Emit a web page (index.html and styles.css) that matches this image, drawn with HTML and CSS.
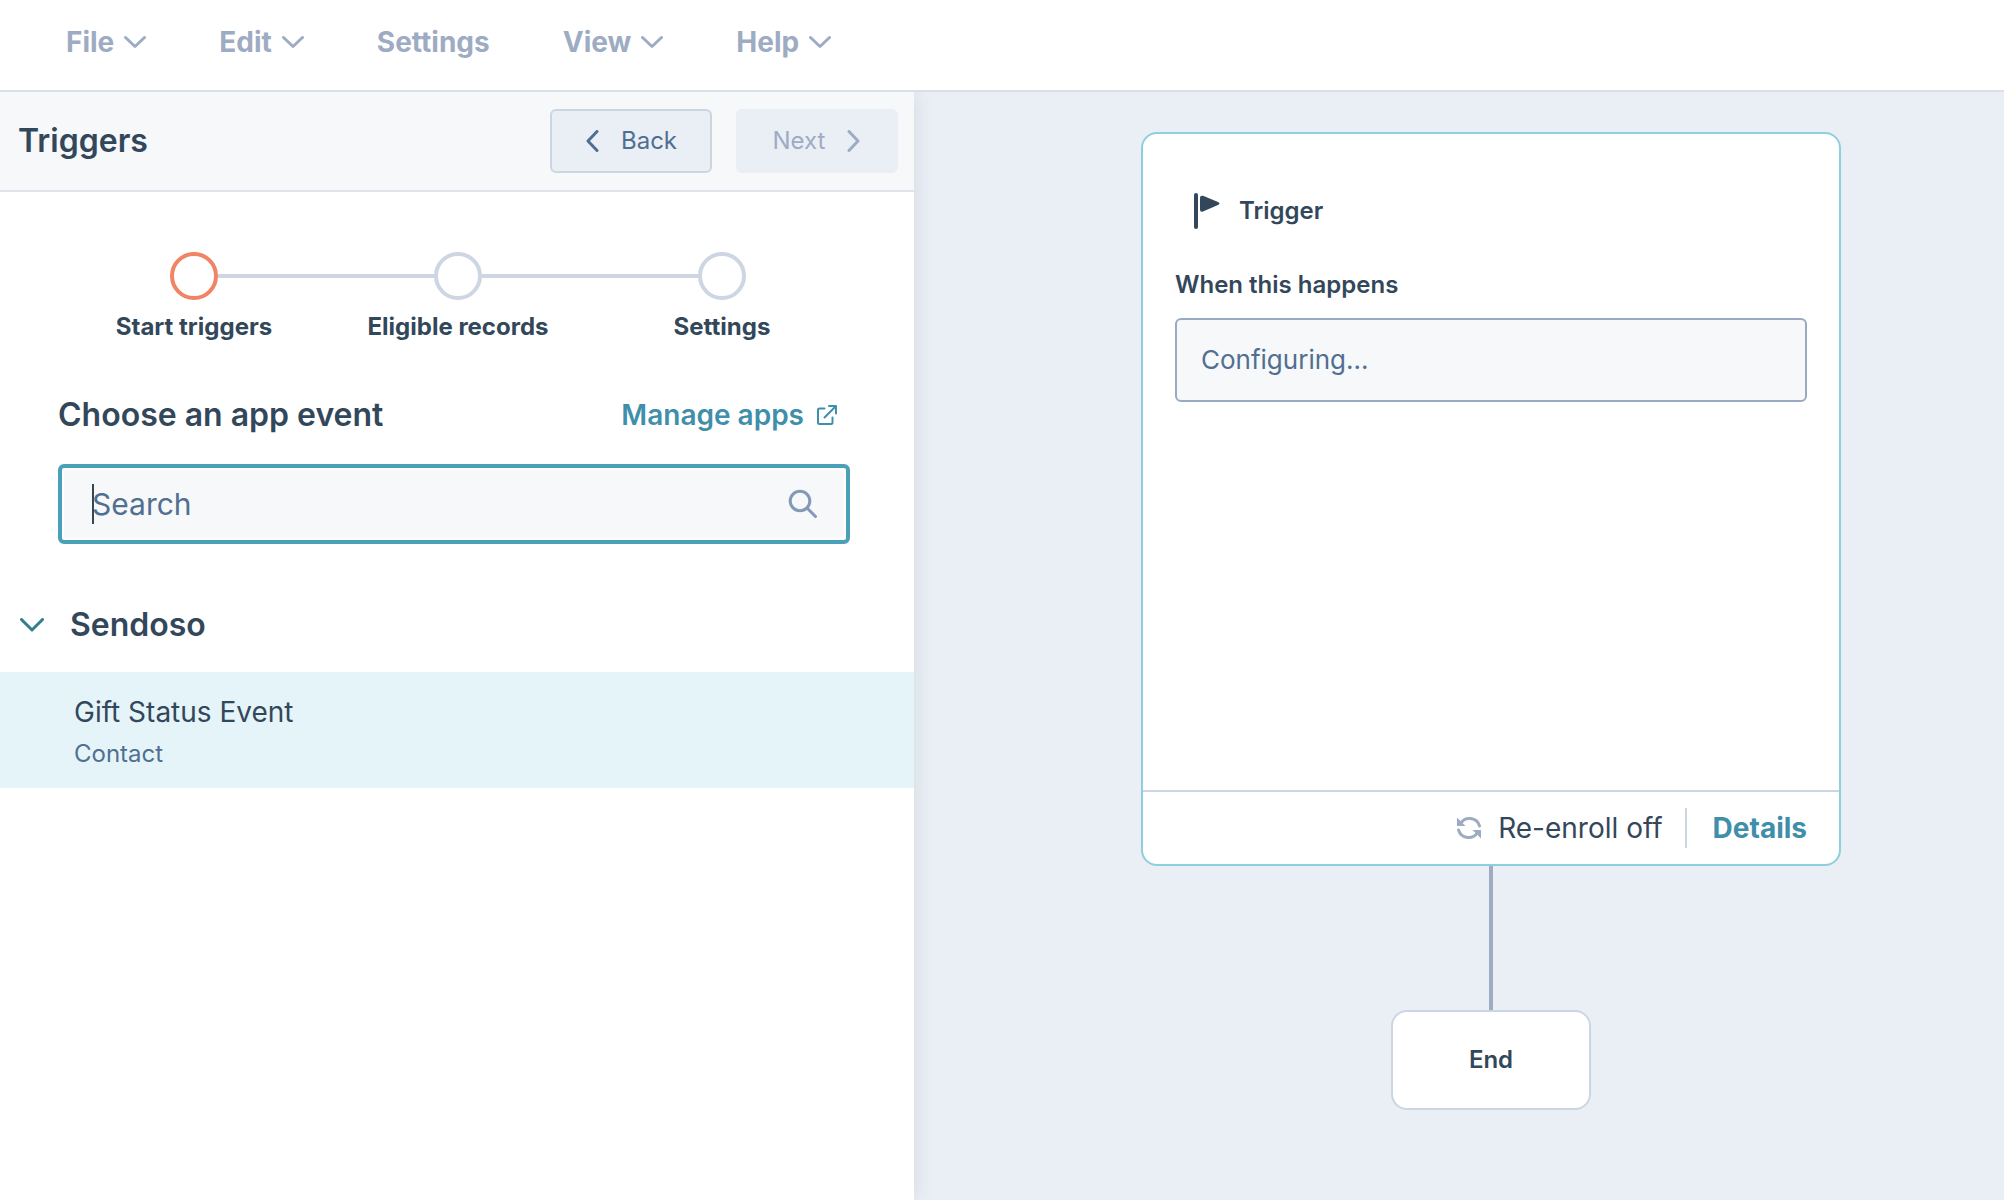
FILE: index.html
```html
<!DOCTYPE html>
<html lang="en">
<head>
<meta charset="utf-8">
<title>Triggers</title>
<link rel="stylesheet" href="styles.css">
</head>
<body>
<header class="topbar">
  <nav class="menu" aria-label="Main">
    <button class="menu-item" type="button">File
      <svg class="caret-down" viewBox="0 0 22 14" aria-hidden="true"><path d="M1.500 2.500L11 11.500l9.500-9"/></svg>
    </button>
    <button class="menu-item" type="button">Edit
      <svg class="caret-down" viewBox="0 0 22 14" aria-hidden="true"><path d="M1.500 2.500L11 11.500l9.500-9"/></svg>
    </button>
    <button class="menu-item" type="button">Settings</button>
    <button class="menu-item" type="button">View
      <svg class="caret-down" viewBox="0 0 22 14" aria-hidden="true"><path d="M1.500 2.500L11 11.500l9.500-9"/></svg>
    </button>
    <button class="menu-item" type="button">Help
      <svg class="caret-down" viewBox="0 0 22 14" aria-hidden="true"><path d="M1.500 2.500L11 11.500l9.500-9"/></svg>
    </button>
  </nav>
</header>
<div class="workspace">
  <aside class="panel">
    <div class="panel-head">
      <h1 class="title">Triggers</h1>
      <button class="btn btn-back" type="button">
        <svg class="arrow" viewBox="0 0 14 22" aria-hidden="true"><path d="M12 1.500L3 11l9 9.500"/></svg>
        Back
      </button>
      <button class="btn btn-next" type="button" disabled>
        Next
        <svg class="arrow" viewBox="0 0 14 22" aria-hidden="true"><path d="M2 1.500L11 11l-9 9.500"/></svg>
      </button>
    </div>
    <ol class="steps">
      <li class="step step-current"><span class="dot"></span><span class="step-label">Start triggers</span></li>
      <li class="step"><span class="dot"></span><span class="step-label">Eligible records</span></li>
      <li class="step"><span class="dot"></span><span class="step-label">Settings</span></li>
    </ol>
    <div class="chooser">
      <div class="chooser-head">
        <h2 class="title"><label for="search">Choose an app event</label></h2>
        <a class="link" href="#">Manage apps
          <svg class="external" viewBox="0 0 22 22" aria-hidden="true"><path d="M8.500 4.500H3.500a1.500 1.500 0 0 0-1.500 1.500V18.500a1.500 1.500 0 0 0 1.500 1.500H15a1.500 1.500 0 0 0 1.500-1.500V13.500M8.500 13.500L19.500 2.500M13 2H20v7.500"/></svg>
        </a>
      </div>
      <div class="search">
        <span class="text-cursor"></span>
        <input class="search-input" id="search" type="text" placeholder="Search">
        <svg class="magnifier" viewBox="0 0 30 30" aria-hidden="true"><circle cx="12" cy="12" r="9.800"/><path d="M19 19l8.500 8.500"/></svg>
      </div>
    </div>
    <section>
      <h2 class="group title">
        <svg class="group-caret" viewBox="0 0 24 14" aria-hidden="true"><path d="M1.500 1.500L12 12 22.500 1.500"/></svg>
        Sendoso
      </h2>
      <button class="event" type="button">
        <span class="event-name">Gift Status Event</span>
        <span class="event-type">Contact</span>
      </button>
    </section>
  </aside>
  <main class="canvas">
    <article class="card">
      <div class="card-body">
        <h3 class="card-title">
          <svg class="flag" viewBox="0 0 28 36" aria-hidden="true"><path d="M3 2v32" fill="none" stroke="currentColor" stroke-width="4" stroke-linecap="round"/><path d="M7 5q0-3 3-2.200L25 9q3 1.500 0 3L10 18.500q-3 1-3-2z" fill="currentColor"/></svg>
          Trigger
        </h3>
        <div class="label">When this happens</div>
        <div class="field">Configuring...</div>
      </div>
      <footer class="card-foot">
        <svg class="refresh" viewBox="0 0 26 26" aria-hidden="true"><path d="M4.500 8.500A10.500 10.500 0 0 1 23.500 11M21.500 17.500A10.500 10.500 0 0 1 2.500 15" fill="none" stroke="currentColor" stroke-width="3"/><path d="M1 2.500V11h8.500zM25 23.500V15h-8.500z" fill="currentColor"/></svg>
        <span class="reenroll">Re-enroll off</span>
        <a class="link details" href="#">Details</a>
      </footer>
    </article>
    <div class="connector"></div>
    <div class="end">End</div>
  </main>
</div>
</body>
</html>
```
FILE: styles.css
```css
* { box-sizing: border-box; }

body {
  margin: 0;
  min-height: 100vh;
  display: flex;
  flex-direction: column;
  font-family: Inter, "Open Sans", sans-serif;
  font-size: 24px;
  line-height: 32px;
  color: #33475b;
  background: #fff;
}

button { font: inherit; cursor: pointer; }
h1, h2, h3, ol { margin: 0; padding: 0; }
svg { flex: none; fill: none; stroke-width: 3; stroke-linecap: round; stroke-linejoin: round; }

.topbar {
  height: 92px;
  border-bottom: 2px solid #dbdfe8;
  padding: 0 66px;
  display: flex;
}
.menu { display: flex; gap: 73px; padding-bottom: 6px; }
.menu-item {
  display: flex;
  align-items: center;
  gap: 10px;
  padding: 0;
  border: 0;
  background: none;
  color: #9dacc3;
  font-size: 28px;
  font-weight: 700;
}
.caret-down { width: 22px; height: 14px; stroke: currentColor; }

.workspace { flex: 1; display: flex; }

.panel {
  flex: none;
  width: 914px;
  background: #fff;
  box-shadow: 0 0 20px rgba(45, 62, 60, 0.12);
  clip-path: inset(0 -32px 0 0);
  z-index: 1;
}
.title { font-size: 32px; line-height: 40px; font-weight: 600; }
.panel-head {
  display: flex;
  align-items: center;
  gap: 24px;
  height: 100px;
  padding: 0 16px 0 18px;
  background: #f6f8fa;
  border-bottom: 2px solid #dfe3eb;
}
.panel-head .title { flex: 1; }
.btn {
  display: flex;
  align-items: center;
  justify-content: center;
  gap: 22px;
  width: 162px;
  height: 64px;
  padding: 0;
  border-radius: 6px;
  border: 2px solid #cbd6e2;
  background: #eaeff6;
  color: #506e91;
}
.btn-next { border-color: #eaeff6; color: #9dacc3; }
.arrow { width: 14px; height: 22px; stroke: currentColor; }

.steps {
  list-style: none;
  display: grid;
  grid-template-columns: repeat(3, 1fr);
  padding: 60px 60px 0 62px;
}
.step {
  display: grid;
  grid-template-columns: 1fr 48px 1fr;
  grid-template-rows: 48px 32px;
  align-items: center;
  row-gap: 11px;
  text-align: center;
  font-weight: 700;
}
.step::before, .step::after { content: ""; height: 4px; background: #cdd6e2; grid-row: 1; }
.step::before { grid-column: 1; }
.step::after { grid-column: 3; }
.step:first-child::before, .step:last-child::after { visibility: hidden; }
.dot { grid-row: 1; grid-column: 2; height: 48px; border: 4px solid #cdd6e2; border-radius: 50%; }
.step-current .dot { border-color: #f08465; }
.step-label { grid-row: 2; grid-column: 1 / -1; }

.chooser { padding: 52px 64px 0 58px; }
.chooser-head { display: flex; justify-content: space-between; align-items: center; padding-right: 12px; }
.link {
  display: flex;
  align-items: center;
  gap: 12px;
  color: #3f8fab;
  font-size: 28px;
  font-weight: 600;
  text-decoration: none;
}
.external { width: 22px; height: 22px; stroke: currentColor; stroke-width: 2; }
.search {
  position: relative;
  display: flex;
  align-items: center;
  margin-top: 29px;
  height: 80px;
  padding: 0 28px 0 30px;
  border: 4px solid #48a1b9;
  border-radius: 6px;
  background: #f6f8fa;
  box-shadow: inset 0 0 0 2px #fff;
}
.search-input {
  flex: 1;
  min-width: 0;
  padding: 0;
  border: 0;
  outline: 0;
  background: none;
  color: inherit;
  font: inherit;
  font-size: 30px;
}
.search-input::placeholder { color: #516f90; opacity: 1; }
.text-cursor { position: absolute; left: 30px; top: 16px; width: 2px; height: 40px; background: #33475b; }
.magnifier { width: 30px; height: 30px; stroke: #8499b8; }

.group { display: flex; align-items: center; gap: 26px; padding: 61px 20px 27px; }
.group-caret { width: 24px; height: 14px; stroke: #307f91; }
.event {
  display: block;
  width: 100%;
  padding: 22px 74px 16px;
  border: 0;
  background: #e5f4f8;
  color: inherit;
  text-align: left;
}
.event-name, .event-type { display: block; line-height: 36px; }
.event-name { font-size: 28px; }
.event-type { margin-top: 6px; color: #516f90; }

.canvas {
  flex: 1;
  display: flex;
  flex-direction: column;
  align-items: center;
  padding: 40px 0 40px 64px;
  background: #eaeff6;
}
.card {
  display: flex;
  flex-direction: column;
  width: 700px;
  min-height: 734px;
  border: 2px solid #8dcfdc;
  border-radius: 16px;
  background: #fff;
}
.card-body { flex: 1; padding: 57px 32px; }
.card-title {
  display: flex;
  align-items: center;
  gap: 18px;
  padding-left: 18px;
  font-size: 24px;
  line-height: 40px;
  font-weight: 600;
}
.flag { width: 28px; height: 36px; }
.label { margin-top: 38px; font-weight: 600; }
.field {
  margin-top: 17px;
  padding: 22px 24px;
  border: 2px solid #9aaac1;
  border-radius: 6px;
  background: #f6f8fa;
  color: #516f90;
  font-size: 26px;
  line-height: 36px;
}
.card-foot {
  display: flex;
  align-items: center;
  justify-content: flex-end;
  height: 74px;
  padding: 0 32px;
  border-top: 2px solid #cbd6e2;
  font-size: 28px;
}
.refresh { width: 26px; height: 26px; color: #9dacc3; margin-right: 16px; }
.reenroll { line-height: 40px; padding-right: 22px; border-right: 2px solid #cbd6e2; }
.details { padding-left: 26px; font-weight: 700; }
.connector { width: 4px; height: 144px; background: #9dacc3; }
.end {
  display: grid;
  place-items: center;
  width: 200px;
  height: 100px;
  border: 2px solid #cbd6e2;
  border-radius: 16px;
  background: #fff;
  font-weight: 600;
}
```
